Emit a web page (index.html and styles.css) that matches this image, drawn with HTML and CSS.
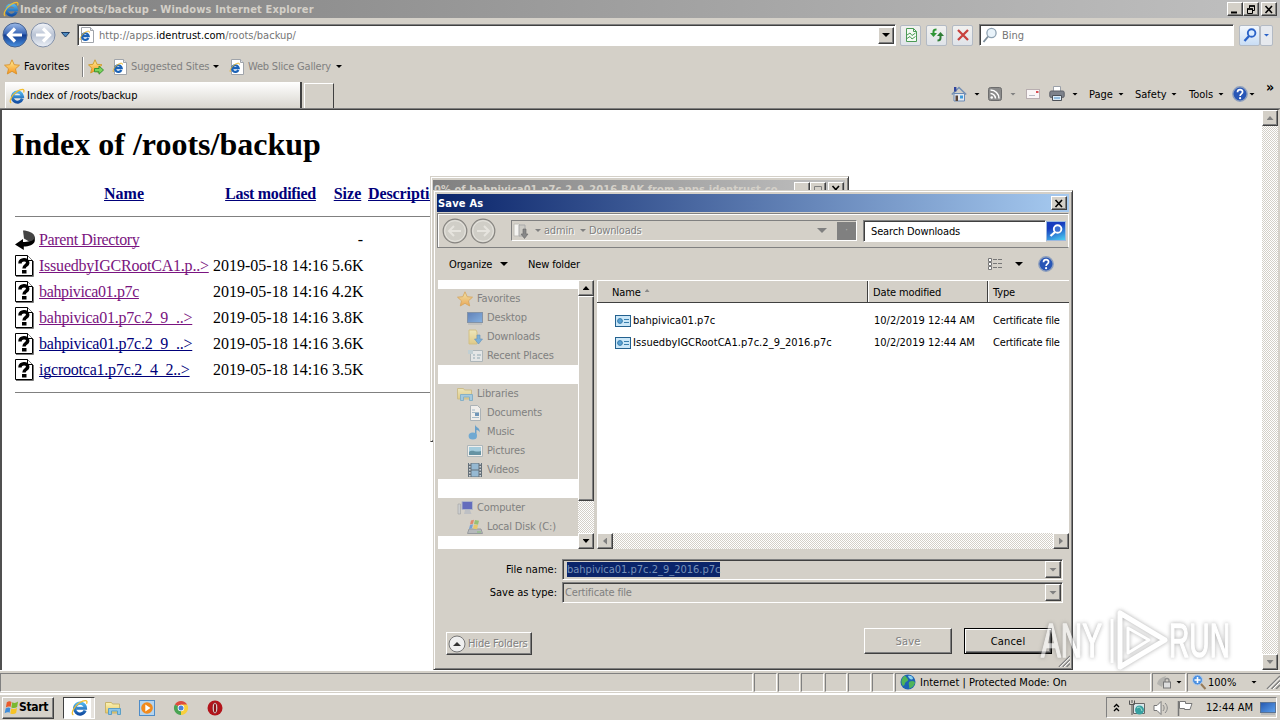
FILE: index.html
```html
<!DOCTYPE html>
<html lang="en">
<head>
    <meta charset="UTF-8">
    <title>Index of /roots/backup - Windows Internet Explorer</title>
    <link rel="stylesheet" href="styles.css">
</head>
<body>
    <!-- Icon sprite -->
    <svg class="sprite" width="0" height="0">
        <defs>
            <linearGradient id="gBlue" x1="0" y1="0" x2="0" y2="1"><stop offset="0" stop-color="#9dbbe8"/><stop offset=".45" stop-color="#3b68b8"/><stop offset=".5" stop-color="#123c91"/><stop offset="1" stop-color="#4a92e0"/></linearGradient>
            <linearGradient id="gPale" x1="0" y1="0" x2="0" y2="1"><stop offset="0" stop-color="#f4f6fa"/><stop offset=".5" stop-color="#b9c3d4"/><stop offset="1" stop-color="#edf1f7"/></linearGradient>
            <linearGradient id="gStar" x1="0" y1="0" x2="0" y2="1"><stop offset="0" stop-color="#fff09a"/><stop offset="1" stop-color="#f7941d"/></linearGradient>
            <linearGradient id="gFolder" x1="0" y1="0" x2="0" y2="1"><stop offset="0" stop-color="#fbf3b4"/><stop offset="1" stop-color="#e6c766"/></linearGradient>
            <linearGradient id="gScreen" x1="0" y1="0" x2="1" y2="1"><stop offset="0" stop-color="#2457ae"/><stop offset="1" stop-color="#5ea2ee"/></linearGradient>
            <linearGradient id="gIe" x1="0" y1="0" x2="0" y2="1"><stop offset="0" stop-color="#4fb4ee"/><stop offset="1" stop-color="#1450a4"/></linearGradient>
        </defs>
        <symbol id="ie" viewBox="0 0 16 16">
            <path d="M13.300 10.800A5.100 5.100 0 1 1 13.600 8.700H5" fill="none" stroke="url(#gIe)" stroke-width="3"/>
            <path d="M2.200 15C-.6 13.400 3.200 6.600 8 3.600 12 1 16.400 .2 14.600 4.400" fill="none" stroke="#f2bd2d" stroke-width="1.200"/>
        </symbol>
        <symbol id="iepage" viewBox="0 0 16 16">
            <path d="M2.500.5h9l3 3v12h-12z" fill="#fff" stroke="#a0a4aa"/>
            <path d="M11.500.5v3h3" fill="#e0e3e8" stroke="#a0a4aa"/>
            <path d="M9.400 11A3.300 3.300 0 1 1 9.700 9.200H4" fill="none" stroke="#1c63b7" stroke-width="2.200"/>
            <path d="M1.600 13C0 11.600 3 7.400 6 5.400 9 3.600 11 4 10.400 5.600" fill="none" stroke="#e9b62c"/>
        </symbol>
        <symbol id="back" viewBox="0 0 26 26">
            <circle cx="13" cy="13" r="12" fill="url(#gBlue)" stroke="#46618f"/>
            <path d="M13 6.500 6.500 13l6.500 6.500M7 13h13" fill="none" stroke="#fff" stroke-width="3.200"/>
        </symbol>
        <symbol id="forward" viewBox="0 0 26 26">
            <circle cx="13" cy="13" r="12" fill="url(#gPale)" stroke="#8290a8"/>
            <path d="M13 6.500 19.500 13 13 19.500M19 13H6" fill="none" stroke="#fff" stroke-width="3.200"/>
        </symbol>
        <symbol id="navoff" viewBox="0 0 26 26">
            <circle cx="13" cy="13" r="11.800" fill="#d0cec7" stroke="#85837f" stroke-width="1.200"/>
            <circle cx="13" cy="13" r="10.300" fill="none" stroke="#e6e4de"/>
            <path d="M12 8l-5 5 5 5M8 13h11" fill="none" stroke="#e6e4de" stroke-width="2"/>
        </symbol>
        <symbol id="star" viewBox="0 0 16 16">
            <path d="M8 .8 10.200 5.700 15.500 6.200 11.500 9.800 12.700 15 8 12.300 3.300 15 4.500 9.800 .5 6.200 5.800 5.700z" fill="url(#gStar)" stroke="#d8912a" stroke-width=".9"/>
        </symbol>
        <symbol id="staradd" viewBox="0 0 16 16">
            <path d="M7 .8 9 5.300 14 5.800 10.300 9.200 11.300 14 7 11.600 2.700 14 3.800 9.200 .5 5.800 5 5.300z" fill="url(#gStar)" stroke="#c99a2a" stroke-width=".9"/>
            <path d="M6.500 9.500h4.500V7l4.500 4-4.500 4.200v-2.400H6.500z" fill="#7bd35c" stroke="#2f8f2b" stroke-width=".9"/>
        </symbol>
        <symbol id="compat" viewBox="0 0 16 16">
            <path d="M3.500 1.500h7l3 3v10h-10z" fill="#f4faf4" stroke="#4b9a55"/>
            <path d="M10.500 1.500v3h3M4 8l3-2 2 2.500L12.500 6M4 11.500l3-2 2 2.500 3.500-2.500" fill="none" stroke="#4b9a55"/>
        </symbol>
        <symbol id="refresh" viewBox="0 0 16 16">
            <path d="M1 6h7L4.500 10z" fill="#2f9636"/><path d="M4.500 7V4.500Q4.500 2.500 7.500 2.500" fill="none" stroke="#2f9636" stroke-width="2"/>
            <path d="M8 9h7l-3.500-4z" fill="#2f7d36"/><path d="M11.500 8v3q0 2.500-3 2.500" fill="none" stroke="#2f7d36" stroke-width="2"/>
        </symbol>
        <symbol id="stop" viewBox="0 0 16 16">
            <path d="M3 3l10 10M13 3 3 13" stroke="#c8413d" stroke-width="2.300"/>
        </symbol>
        <symbol id="mag" viewBox="0 0 16 16">
            <circle cx="9.500" cy="6" r="4.600" fill="#e9f3fa" stroke="#8fa3b3" stroke-width="1.300"/>
            <path d="M6 9.500 1.500 15" stroke="#7e8f9c" stroke-width="1.800"/>
        </symbol>
        <symbol id="magblue" viewBox="0 0 16 16">
            <circle cx="9.600" cy="6" r="3.800" fill="#d9ebff" stroke="#2a62c8" stroke-width="1.900"/>
            <path d="M7 9 2.500 14" stroke="#2a62c8" stroke-width="2.300"/>
        </symbol>
        <symbol id="magwhite" viewBox="0 0 16 16">
            <circle cx="9.600" cy="6" r="3.800" fill="#3b6fd0" stroke="#fff" stroke-width="1.900"/>
            <path d="M7 9 2.500 13" stroke="#fff" stroke-width="2.300"/>
        </symbol>
        <symbol id="home" viewBox="0 0 16 16">
            <path d="M3 7.500h10.500V15H3z" fill="#e4e9f0" stroke="#6c8bb5"/>
            <path d="M.8 8.500 8 1.500l7.200 7" fill="none" stroke="#7590b4" stroke-width="1.600"/>
            <path d="M3 1h2.400v4.500H3z" fill="#31449c"/>
            <path d="M4.500 9.500h2.500V15H4.500z" fill="#5b4538"/><path d="M9 9.500h3v3H9z" fill="#3d9bdc"/>
        </symbol>
        <symbol id="rss" viewBox="0 0 16 16">
            <rect x="1.500" y="1.500" width="13" height="13" rx="2" fill="#8b8b8b" stroke="#6d6d6d"/>
            <circle cx="4.700" cy="11.500" r="1.300" fill="#fff"/>
            <path d="M3.500 7.500a5 5 0 0 1 5 5M3.500 4a8.500 8.500 0 0 1 8.500 8.500" fill="none" stroke="#fff" stroke-width="1.500"/>
        </symbol>
        <symbol id="mail" viewBox="0 0 16 16">
            <rect x="1.500" y="3.500" width="13" height="9" fill="#faf6f6" stroke="#b8aeb0"/>
            <path d="M11 5h2.500v2H11z" fill="#d94f54"/><path d="M4 9.500h6" stroke="#b9bcc4"/>
        </symbol>
        <symbol id="printer" viewBox="0 0 16 16">
            <path d="M4.500.5h7v5h-7z" fill="#fff" stroke="#9ba0a8"/>
            <rect x=".8" y="5" width="14.400" height="6.500" rx="1.500" fill="#7d828b" stroke="#5d6068"/>
            <path d="M3.500 9.500h9v5h-9z" fill="#dcecf8" stroke="#4d5158"/><path d="M5 12h6" stroke="#4a8cc4"/>
        </symbol>
        <symbol id="help" viewBox="0 0 16 16">
            <circle cx="8" cy="8" r="7.200" fill="#2856b6" stroke="#8fa0bd" stroke-width="1.400"/>
            <path d="M5.500 6.200C5.500 2.700 10.700 2.900 10.600 6 10.500 7.800 8.200 8 8.100 10" fill="none" stroke="#fff" stroke-width="1.700"/>
            <circle cx="8.100" cy="12.200" r="1.100" fill="#fff"/>
        </symbol>
        <symbol id="qfile" viewBox="0 0 20 22">
            <path d="M.5.500h12l5 5v15H.5z" fill="#fff" stroke="#000"/><path d="M12.500.500v5h5" fill="#fff" stroke="#000"/><path d="M18.500 6v15.500H1" fill="none" stroke="#777"/>
            <path d="M5 8.500C4.800 3.500 13 3.500 12.700 8 12.400 10.600 9 10.200 9 13.500" fill="none" stroke="#000" stroke-width="3.500"/>
            <path d="M7 15h4.500v3.500H7z" fill="#000"/>
        </symbol>
        <symbol id="parent" viewBox="0 0 20 22">
            <path d="M19.800 8v4c-1 4-6 5.500-11 5.500V21L0 15.500 8 10v3c5 0 9-1 11.800-5z" fill="#000"/>
            <path d="M8 1.500c5 0 11 2 12 7-1 2.500-3 3.500-6 4l-5-3z" fill="#444"/>
        </symbol>
        <symbol id="folderdown" viewBox="0 0 16 16">
            <path d="M1 1h5l1 1v11H1z" fill="#f5f4f1" stroke="#c0beb8"/><path d="M6 2h6v11H6z" fill="#cdcbc5" stroke="#aaa"/>
            <path d="M10 6h3v5h2l-3.500 4.500L8 11h2z" fill="#888" stroke="#666" stroke-width=".6"/>
        </symbol>
        <symbol id="views" viewBox="0 0 16 16">
            <path d="M1.500 2.500h3v3h-3zM1.500 6.500h3v3h-3zM1.500 10.500h3v3h-3z" fill="#fff" stroke="#777"/>
            <path d="M6 3.500h4m1 0h4M6 7.500h4m1 0h4M6 11.500h4m1 0h4" stroke="#777"/>
        </symbol>
        <symbol id="cert" viewBox="0 0 16 12">
            <rect x=".5" y=".5" width="15" height="11" fill="#cbe7f8" stroke="#24618f"/>
            <circle cx="5" cy="6" r="2.400" fill="#5aa2d4" stroke="#387cab"/><path d="M9 4.500h5M9 7.500h5" stroke="#397fae"/>
        </symbol>
        <symbol id="monitor" viewBox="0 0 16 16">
            <rect x=".5" y="2.500" width="15" height="10" fill="url(#gScreen)" stroke="#5a7394"/><path d="M1 14h14" stroke="#9aa2ac"/>
        </symbol>
        <symbol id="dlfolder" viewBox="0 0 16 16">
            <path d="M2 1h7l1 2v12H2z" fill="url(#gFolder)" stroke="#d3b862"/>
            <path d="M10 6h3v4h2.500L11.500 15 7.500 10H10z" fill="#4f9fdf" stroke="#2c72b1" stroke-width=".6"/>
        </symbol>
        <symbol id="recent" viewBox="0 0 16 16">
            <path d="M3.500 2.500h12v11h-12z" fill="#eef3f6" stroke="#9aa9b2"/><path d="M1 2h5v4H1z" fill="#b8cfda"/>
            <path d="M6 7h2M10 7h4M6 10h2M10 10h3" stroke="#6d93a8"/>
        </symbol>
        <symbol id="libs" viewBox="0 0 16 16">
            <path d="M.5 2.500h6l1 1.500h7v9h-14z" fill="url(#gFolder)" stroke="#c8b36b"/>
            <path d="M3.500 8.500h12v6h-3V11h-6v3.500h-3z" fill="#8cc6ea" stroke="#5b9fc6"/>
        </symbol>
        <symbol id="doc" viewBox="0 0 16 16">
            <path d="M3.500.5h7l3 3v12h-10z" fill="#fff" stroke="#96a3ad"/><path d="M5 5h3M5 7.500h7M5 12.500h7" stroke="#8fb0c8"/><path d="M8 8h4v3H8z" fill="#3c78b0"/>
        </symbol>
        <symbol id="music" viewBox="0 0 16 16">
            <path d="M8 0c0 4 6 3 4.500 9C13 6.500 9.500 6 9.500 6v6H8z" fill="#3288cc"/><ellipse cx="5.800" cy="12" rx="4.200" ry="3.600" fill="#3c95d8"/>
        </symbol>
        <symbol id="pic" viewBox="0 0 16 16">
            <path d="M.5 2.500h15v11H.5z" fill="#fff" stroke="#9aaab4"/><path d="M2 4h12v8H2z" fill="#8dcbe8"/><path d="M2 9c4-3 6 1 12-1v4H2z" fill="#2c7390"/>
        </symbol>
        <symbol id="video" viewBox="0 0 16 16">
            <path d="M1 1h14v14H1z" fill="#2b3e50"/><path d="M4.500 1.500h7v6h-7zM4.500 8.500h7v6h-7z" fill="#76aed8"/><path d="M2.800 1v14M13.200 1v14" stroke="#dfe6ec" stroke-width="1.400" stroke-dasharray="1.500 1.500"/>
        </symbol>
        <symbol id="computer" viewBox="0 0 16 16">
            <path d="M5 1.500h10.500v8H5z" fill="#2939b8" stroke="#9ba8c8"/><path d="M8 10h5l1.500 4H7z" fill="#b3b8c2"/><path d="M1 4h2.500v10H1z" fill="#c9cdd4" stroke="#83898f" stroke-width=".6"/>
        </symbol>
        <symbol id="disk" viewBox="0 0 16 16">
            <path d="M2 10h12l1.500 4.500H.5z" fill="#a7adb5" stroke="#777e88"/>
            <path d="M4 1.500l3-.8-1 4-3 .8z" fill="#e5623c"/><path d="M8 1l4 .8-1 4L7 5z" fill="#79b84a"/><path d="M3 6l3-.8-1 4-3 .8z" fill="#4a88d6"/><path d="M7 5.500l4 .8-1 4-4-.8z" fill="#f2c53b"/><path d="M10 13h4" stroke="#57b946"/>
        </symbol>
        <symbol id="winlogo" viewBox="0 0 16 16">
            <path d="M3 2.500C5 1 6.500 1.300 8 2L7 7.500C5.300 6.700 4 6.800 2 8z" fill="#ea5b2c"/><path d="M8.800 2.500c2 .9 4 .8 6.200-.8L14 7.400c-2 1.300-4 1.400-6.200.5z" fill="#7ab82f"/>
            <path d="M1.800 9c2-1.400 3.500-1.200 5-.5L6 13.700c-1.800-.8-3.200-.7-5.300.5z" fill="#3f8ddb"/><path d="M7.700 9c2 .8 4 .8 6.200-.6l-1 5.500c-2 1.300-4 1.300-6.200.4z" fill="#f7c325"/>
        </symbol>
        <symbol id="wmp" viewBox="0 0 16 16">
            <rect x=".5" y=".5" width="15" height="15" fill="#b5d4ee" stroke="#4e8cc8"/><circle cx="8" cy="8" r="5.800" fill="#f28a1c"/><path d="M6.300 4.600 11.500 8l-5.200 3.400z" fill="#fff"/>
        </symbol>
        <symbol id="chrome" viewBox="0 0 16 16">
            <path d="M8 8 1.900 4.500A7 7 0 0 1 14.100 4.500z" fill="#dd4b3e"/><path d="M8 8V4.500h6.100A7 7 0 0 1 8 15z" fill="#f8cf3c"/><path d="M8 8v7A7 7 0 0 1 1.900 4.500z" fill="#4aa453"/>
            <circle cx="8" cy="8" r="3.300" fill="#fff"/><circle cx="8" cy="8" r="2.500" fill="#4a82d8"/>
        </symbol>
        <symbol id="opera" viewBox="0 0 16 16">
            <circle cx="8" cy="8" r="7.500" fill="#b3141b"/><ellipse cx="8" cy="8" rx="2.700" ry="5.500" fill="#e9e4e2" stroke="#7d0b10" stroke-width=".6"/><ellipse cx="8" cy="8" rx="1.200" ry="4.500" fill="#8c0e13"/>
        </symbol>
        <symbol id="globe" viewBox="0 0 16 16">
            <circle cx="8" cy="8" r="7.500" fill="#1d63b4"/><path d="M5 1.500C1 4 .5 9 3 12c3-1 1-3 3-4s3-2 1-4zM9 8c3-2 6-1 6 1-1 3-3 5-6 5.500 1-2-1-4 0-6.500z" fill="#4fb45a"/><path d="M8 2c3-1 5 1 5 3-2 1-4 0-5-3z" fill="#8ad3f0"/>
        </symbol>
        <symbol id="protect" viewBox="0 0 16 16">
            <path d="M1 10c1-5 5-7 9-8l-4 11z" fill="#b4b3af"/><path d="M9 8V6.500a2 2 0 0 1 4 0V8" fill="none" stroke="#8b8b8b" stroke-width="1.400"/><rect x="7.500" y="8" width="7" height="6" fill="#ddd" stroke="#777"/>
        </symbol>
        <symbol id="zoomin" viewBox="0 0 16 16">
            <circle cx="6.500" cy="6" r="5" fill="#4c90e0" stroke="#b5cdea"/><path d="M6.500 3v6M3.500 6h6" stroke="#fff" stroke-width="1.600"/><path d="M10 10l4.500 5" stroke="#967b5a" stroke-width="2"/>
        </symbol>
        <symbol id="net" viewBox="0 0 16 16">
            <path d="M4.500 3.500h11v10h-11z" fill="#d9e7ea" stroke="#666"/><circle cx="10.500" cy="10" r="4.500" fill="#37a0a0"/><path d="M8 8c3-2 4 0 5 3" stroke="#a5dfd0" fill="none"/>
            <path d="M.5.500v4h5v-4M3 0v3M3 5v10" fill="none" stroke="#555"/>
        </symbol>
        <symbol id="sound" viewBox="0 0 16 16">
            <path d="M1 5.500h3l4-4v13l-4-4H1z" fill="#fff" stroke="#777"/><path d="M10 5c1.500 2 1.500 4 0 6M12 3c3 3 3 7 0 10" fill="none" stroke="#888"/>
        </symbol>
        <symbol id="flag" viewBox="0 0 16 16">
            <path d="M1.500 1v15" stroke="#777" stroke-width="1.500"/><path d="M2.500 1.500h6v2h6.500l-2 6H7.500v-1h-5z" fill="#fff" stroke="#777"/>
        </symbol>
        <symbol id="grip" viewBox="0 0 14 14">
            <path d="M14 1 1 14M14 5.500 5.500 14M14 10l-4 4" stroke="#808080" stroke-width="1.500"/><path d="M14 2.500 2.500 14M14 7 7 14" stroke="#fff"/>
        </symbol>
    </svg>

    <div class="browser">
        <div class="titlebar">
            <svg class="icon"><use href="#ie"/></svg>
            <span class="title-text">Index of /roots/backup - Windows Internet Explorer</span>
            <div class="window-buttons">
                <span class="win-btn"><svg width="10" height="9"><path d="M1 7.500h6" stroke="#000" stroke-width="2"/></svg></span>
                <span class="win-btn"><svg width="10" height="9"><path d="M3.500 3V1h5v4.500H7M1.500 4h5v4.500h-5z" fill="none" stroke="#000"/><path d="M3 1h6M1 4h6" stroke="#000" stroke-width="1.500"/></svg></span>
                <span class="win-btn close"><svg width="10" height="9"><path d="M1.500 1 8 8M8 1 1.500 8" stroke="#000" stroke-width="1.600"/></svg></span>
            </div>
        </div>

        <div class="navbar">
            <svg class="nav-round"><use href="#back"/></svg>
            <svg class="nav-round"><use href="#forward"/></svg>
            <svg class="recent-caret" width="10" height="6"><path d="M.5.500h8L4.500 5z" fill="#4e8ac0" stroke="#1c3d66"/></svg>
            <div class="field address">
                <svg class="icon"><use href="#iepage"/></svg>
                <span class="url">http://apps.<b>identrust.com</b>/roots/backup/</span>
                <span class="drop"><i class="caret wide"></i></span>
            </div>
            <span class="tool-btn"><svg class="icon"><use href="#compat"/></svg></span>
            <span class="tool-btn"><svg class="icon"><use href="#refresh"/></svg></span>
            <span class="tool-btn"><svg class="icon"><use href="#stop"/></svg></span>
            <div class="field search">
                <svg class="icon"><use href="#mag"/></svg>
                <span>Bing</span>
            </div>
            <span class="tool-btn go"><svg class="icon"><use href="#magblue"/></svg></span>
            <span class="tool-btn go-drop"><i class="caret blue"></i></span>
        </div>

        <div class="favbar">
            <svg class="icon"><use href="#star"/></svg>
            <span class="fav-label">Favorites</span>
            <svg class="icon add"><use href="#staradd"/></svg>
            <svg class="icon page1"><use href="#iepage"/></svg>
            <span class="fav-link suggested">Suggested Sites</span><i class="caret"></i>
            <svg class="icon page2"><use href="#iepage"/></svg>
            <span class="fav-link slice">Web Slice Gallery</span><i class="caret"></i>
        </div>

        <div class="tabbar">
            <div class="tab"><svg class="icon"><use href="#ie"/></svg><span>Index of /roots/backup</span></div>
            <div class="new-tab"></div>
            <div class="commands">
                <svg class="icon"><use href="#home"/></svg><i class="caret"></i>
                <svg class="icon rss"><use href="#rss"/></svg><i class="caret off"></i>
                <svg class="icon mail"><use href="#mail"/></svg>
                <svg class="icon print"><use href="#printer"/></svg><i class="caret"></i>
                <span class="cmd page">Page</span><i class="caret"></i>
                <span class="cmd safety">Safety</span><i class="caret"></i>
                <span class="cmd tools">Tools</span><i class="caret"></i>
                <svg class="icon helpicon"><use href="#help"/></svg><i class="caret near"></i>
                <span class="more">»</span>
            </div>
        </div>

        <div class="viewport">
            <div class="document">
                <h1>Index of /roots/backup</h1>
                <div class="listing head">
                    <span></span><a>Name</a><a class="modified">Last modified</a><a>Size</a><a class="desc">Description</a>
                </div>
                <hr>
                <div class="listing">
                    <svg><use href="#parent"/></svg><a class="visited tight">Parent Directory</a><span></span><span class="size">-</span>
                </div>
                <div class="listing">
                    <svg><use href="#qfile"/></svg><a class="visited">IssuedbyIGCRootCA1.p..&gt;</a><span>2019-05-18 14:16</span><span class="size">5.6K</span>
                </div>
                <div class="listing">
                    <svg><use href="#qfile"/></svg><a class="visited tight">bahpivica01.p7c</a><span>2019-05-18 14:16</span><span class="size">4.2K</span>
                </div>
                <div class="listing">
                    <svg><use href="#qfile"/></svg><a class="visited">bahpivica01.p7c.2_9_..&gt;</a><span>2019-05-18 14:16</span><span class="size">3.8K</span>
                </div>
                <div class="listing">
                    <svg><use href="#qfile"/></svg><a>bahpivica01.p7c.2_9_..&gt;</a><span>2019-05-18 14:16</span><span class="size">3.6K</span>
                </div>
                <div class="listing">
                    <svg><use href="#qfile"/></svg><a>igcrootca1.p7c.2_4_2..&gt;</a><span>2019-05-18 14:16</span><span class="size">3.5K</span>
                </div>
                <hr>
            </div>
            <div class="scrollbar page-scroll">
                <span class="scroll-btn"><i class="arrow up off"></i></span>
                <span class="scroll-btn"><i class="arrow down off"></i></span>
            </div>
        </div>

        <div class="statusbar">
            <div class="cell main"></div>
            <div class="cell"></div><div class="cell"></div><div class="cell"></div><div class="cell"></div><div class="cell"></div><div class="cell"></div>
            <div class="cell zone"><svg class="icon"><use href="#globe"/></svg><span>Internet | Protected Mode: On</span></div>
            <div class="cell lock"><svg class="icon"><use href="#protect"/></svg><i class="caret"></i></div>
            <div class="cell zoom"><svg class="icon"><use href="#zoomin"/></svg><span>100%</span><i class="caret"></i><svg class="grip"><use href="#grip"/></svg></div>
        </div>
    </div>

    <div class="taskbar">
        <div class="start"><svg><use href="#winlogo"/></svg><span>Start</span></div>
        <div class="task-active"><svg><use href="#ie"/></svg></div>
        <svg class="pin"><use href="#libs"/></svg>
        <svg class="pin"><use href="#wmp"/></svg>
        <svg class="pin"><use href="#chrome"/></svg>
        <svg class="pin"><use href="#opera"/></svg>
        <div class="tray">
            <svg class="chev" width="7" height="9"><path d="M1 4l2.500-2.500L6 4M1 8l2.500-2.500L6 8" fill="none" stroke="#000" stroke-width="1.300"/></svg>
            <svg class="icon"><use href="#net"/></svg>
            <svg class="icon"><use href="#sound"/></svg>
            <svg class="icon"><use href="#flag"/></svg>
            <span class="clock">12:44 AM</span>
            <svg class="icon"><use href="#monitor"/></svg>
        </div>
    </div>

    <!-- Download progress window, mostly behind the dialog -->
    <div class="window progress">
        <div class="progress-title">
            <span>0% of bahpivica01.p7c.2_9_2016.BAK from apps.identrust.co...</span>
            <b class="win-btn"></b>
            <b class="win-btn"><svg width="10" height="9"><path d="M1.500 1.500h7v7h-7z" fill="none" stroke="#808080"/></svg></b>
            <b class="win-btn"><svg width="10" height="9"><path d="M1.500 1 8 8M8 1 1.500 8" stroke="#000" stroke-width="1.600"/></svg></b>
        </div>
    </div>

    <!-- Save As dialog -->
    <div class="window dialog">
        <div class="dialog-title">
            <span>Save As</span>
            <b class="win-btn"><svg width="10" height="9"><path d="M1.500 1 8 8M8 1 1.500 8" stroke="#000" stroke-width="1.600"/></svg></b>
        </div>
        <div class="dialog-nav">
            <svg class="round"><use href="#navoff"/></svg>
            <svg class="round flip"><use href="#navoff"/></svg>
            <div class="path">
                <svg class="icon"><use href="#folderdown"/></svg>
                <i class="caret off"></i><span class="crumb admin">admin</span>
                <i class="caret off"></i><span class="crumb">Downloads</span>
                <i class="caret big off"></i><span class="go-off">·</span>
            </div>
            <div class="field dialog-search">Search Downloads</div>
            <div class="search-btn"><svg class="icon"><use href="#magwhite"/></svg></div>
        </div>
        <div class="dialog-tools">
            <span class="organize">Organize</span><i class="caret big"></i>
            <span class="newfolder">New folder</span>
            <svg class="icon views"><use href="#views"/></svg><i class="caret big"></i>
            <svg class="icon help"><use href="#help"/></svg>
        </div>
        <div class="dialog-body">
            <div class="tree">
                <div class="group">
                    <div class="node root"><svg class="icon"><use href="#star"/></svg>Favorites</div>
                    <div class="node"><svg class="icon"><use href="#monitor"/></svg>Desktop</div>
                    <div class="node"><svg class="icon"><use href="#dlfolder"/></svg>Downloads</div>
                    <div class="node"><svg class="icon"><use href="#recent"/></svg>Recent Places</div>
                </div>
                <div class="group">
                    <div class="node root"><svg class="icon"><use href="#libs"/></svg>Libraries</div>
                    <div class="node"><svg class="icon"><use href="#doc"/></svg>Documents</div>
                    <div class="node"><svg class="icon"><use href="#music"/></svg>Music</div>
                    <div class="node"><svg class="icon"><use href="#pic"/></svg>Pictures</div>
                    <div class="node"><svg class="icon"><use href="#video"/></svg>Videos</div>
                </div>
                <div class="group">
                    <div class="node root"><svg class="icon"><use href="#computer"/></svg>Computer</div>
                    <div class="node"><svg class="icon"><use href="#disk"/></svg>Local Disk (C:)</div>
                </div>
            </div>
            <div class="scrollbar tree-scroll">
                <span class="scroll-btn"><i class="arrow up"></i></span>
                <span class="thumb"></span>
                <span class="scroll-btn end"><i class="arrow down"></i></span>
            </div>
            <div class="files">
                <div class="row columns"><span class="colname">Name <i class="arrow up tiny"></i></span><span>Date modified</span><span>Type</span></div>
                <div class="row file"><span class="name"><svg class="cert"><use href="#cert"/></svg>bahpivica01.p7c</span><span>10/2/2019 12:44 AM</span><span class="type">Certificate file</span></div>
                <div class="row file"><span class="name"><svg class="cert"><use href="#cert"/></svg>IssuedbyIGCRootCA1.p7c.2_9_2016.p7c</span><span>10/2/2019 12:44 AM</span><span class="type">Certificate file</span></div>
                <div class="scrollbar files-scroll">
                    <span class="scroll-btn"><i class="arrow left off"></i></span>
                    <span class="scroll-btn"><i class="arrow right off"></i></span>
                </div>
            </div>
        </div>
        <div class="form">
            <label>File name:</label>
            <div class="field combo"><span class="selected">bahpivica01.p7c.2_9_2016.p7c</span><span class="drop"><i class="caret wide off"></i></span></div>
            <label>Save as type:</label>
            <div class="field combo"><span class="type">Certificate file</span><span class="drop"><i class="caret wide off"></i></span></div>
        </div>
        <div class="actions">
            <div class="hide-folders">
                <svg width="18" height="18"><circle cx="9" cy="9" r="8" fill="#efefef" stroke="#777"/><path d="M5 11l4-4 4 4z" fill="#333"/></svg>
                <span>Hide Folders</span>
            </div>
            <div class="btn off">Save</div>
            <div class="btn default"><span>Cancel</span></div>
        </div>
        <svg class="grip corner"><use href="#grip"/></svg>
    </div>

    <svg class="watermark" width="244" height="72" viewBox="0 0 244 72">
        <text x="5" y="52" textLength="61" lengthAdjust="spacingAndGlyphs">ANY</text>
        <path d="M84 8v54l45-27z" fill="none" stroke-width="5"/>
        <path d="M76 14v44M92 23v25l21-13z" fill="none" stroke-width="3"/>
        <text x="133" y="52" textLength="61" lengthAdjust="spacingAndGlyphs">RUN</text>
    </svg>
</body>
</html>
```
FILE: styles.css
```css
* {
    box-sizing: border-box;
}
body {
    margin: 0;
    width: 1280px;
    height: 720px;
    overflow: hidden;
    position: relative;
    display: flex;
    flex-direction: column;
    background: #d4d0c8;
    color: #000;
    font-family: "DejaVu Sans Condensed", "DejaVu Sans", sans-serif;
    font-size: 11px;
    letter-spacing: 0;
    line-height: 15px;
    white-space: nowrap;
}
.sprite {
    position: absolute;
}
svg {
    display: block;
    flex: none;
}
.icon {
    width: 16px;
    height: 16px;
}

/* Arrows */
.caret {
    flex: none;
    width: 6px;
    height: 3px;
    background: #000;
    clip-path: polygon(0 0, 100% 0, 50% 100%);
}
.caret.wide {
    width: 8px;
    height: 4px;
}
.caret.big {
    width: 8px;
    height: 4px;
}
.caret.off {
    background: #808080;
}
.caret.blue {
    background: #2a62c8;
}
.arrow {
    width: 7px;
    height: 4px;
    background: #000;
}
.arrow.up { clip-path: polygon(50% 0, 100% 100%, 0 100%); }
.arrow.down { clip-path: polygon(0 0, 100% 0, 50% 100%); }
.arrow.left { width: 4px; height: 7px; clip-path: polygon(100% 0, 100% 100%, 0 50%); }
.arrow.right { width: 4px; height: 7px; clip-path: polygon(0 0, 100% 50%, 0 100%); }
.arrow.off { background: #808080; }
.arrow.tiny {
    display: inline-block;
    width: 5px;
    height: 3px;
    margin: 0 0 4px 1px;
    background: #888;
}

/* Bevels */
.win-btn, .drop, .scroll-btn, .thumb {
    display: flex;
    align-items: center;
    justify-content: center;
    flex: none;
    background: #d4d0c8;
    border: 1px solid;
    border-color: #fff #404040 #404040 #fff;
    box-shadow: inset -1px -1px #808080;
}
.win-btn {
    width: 16px;
    height: 14px;
}
.drop {
    width: 16px;
    height: 17px;
    margin-left: auto;
}
.scroll-btn {
    width: 16px;
    height: 16px;
}
.field {
    display: flex;
    align-items: center;
    background: #fff;
    border: 1px solid;
    border-color: #808080 #fff #fff #808080;
    box-shadow: inset 1px 1px #404040;
}
.scrollbar {
    display: flex;
    background: repeating-conic-gradient(#fff 0 25%, #d4d0c8 0 50%) 0 0 / 2px 2px;
}

/* Browser */
.browser {
    height: 694px;
    display: flex;
    flex-direction: column;
}
.titlebar {
    height: 18px;
    display: flex;
    align-items: center;
    padding: 0 3px 0 3px;
    background: linear-gradient(90deg, #808080, #c0c0c0);
    color: #d4d0c8;
    font-weight: bold;
}
.title-text {
    margin-left: 1px;
    padding-top: 1px;
    letter-spacing: 0.15px;
}
.window-buttons {
    display: flex;
    margin-left: auto;
}
.win-btn.close {
    margin-left: 2px;
}
.navbar {
    height: 35px;
    display: flex;
    align-items: center;
    padding: 0 0 1px 2px;
}
.nav-round {
    width: 26px;
    height: 26px;
    margin-right: 2px;
}
.recent-caret {
    margin: 0 6px 0 3px;
}
.address {
    width: 819px;
    height: 22px;
    padding: 0 1px;
    margin-right: 4px;
}
.url {
    margin-left: 4px;
    padding-top: 1px;
    color: #757575;
}
.url b {
    font-weight: normal;
    color: #000;
}
.tool-btn {
    display: flex;
    align-items: center;
    justify-content: center;
    width: 21px;
    height: 21px;
    margin-right: 5px;
    border: 1px solid #b3bac4;
    border-radius: 2px;
    background: linear-gradient(#f1f1ef, #dfe3e9);
}
.search {
    width: 255px;
    height: 22px;
    padding-left: 2px;
    margin: 0 5px 0 1px;
    color: #757575;
}
.search span {
    margin-left: 4px;
    padding-top: 1px;
}
.tool-btn.go {
    margin-right: 0;
    background: linear-gradient(#f3f7fc, #c9ddf4);
}
.tool-btn.go-drop {
    width: 13px;
    margin-right: 0;
    background: #e6e9ee;
}
.favbar {
    height: 27px;
    display: flex;
    align-items: center;
    padding-left: 4px;
}
.fav-label {
    width: 59px;
    height: 20px;
    line-height: 19px;
    margin-left: 4px;
    letter-spacing: 0.1px;
    border-right: 1px solid #808080;
    box-shadow: 1px 0 #fff;
}
.icon.add {
    margin-left: 5px;
}
.icon.page1 {
    margin-left: 8px;
}
.fav-link {
    color: #808080;
    margin-left: 3px;
    letter-spacing: -0.1px;
}
.suggested {
    width: 82px;
}
.slice {
    width: 88px;
    letter-spacing: -0.2px;
}
.icon.page2 {
    margin-left: 10px;
}
.tabbar {
    height: 29px;
    display: flex;
    align-items: flex-end;
    padding-left: 5px;
    border-bottom: 1px solid #808080;
}
.tab {
    width: 297px;
    height: 26px;
    display: flex;
    align-items: center;
    padding: 1px 0 0 3px;
    background: linear-gradient(#fff, #d9d6cf);
    border-right: 2px solid #404040;
    border-left: 1px solid #fff;
}
.tab span {
    margin-left: 2px;
}
.new-tab {
    width: 30px;
    height: 25px;
    margin-left: 2px;
    border: 1px solid #fff;
    border-right: 1px solid #404040;
    border-bottom: 0;
}
.commands {
    display: flex;
    align-items: center;
    height: 28px;
    margin-left: 617px;
}
.commands .caret {
    margin-left: 7px;
}
.commands .rss {
    margin-left: 7px;
}
.commands .mail {
    margin-left: 9px;
}
.commands .print {
    margin-left: 8px;
}
.commands .cmd {
    padding-top: 1px;
}
.commands .page {
    width: 25px;
    margin-left: 11px;
}
.commands .safety {
    width: 32px;
    margin-left: 11px;
}
.commands .tools {
    width: 25px;
    margin-left: 12px;
}
.commands .cmd + .caret {
    margin-left: 4px;
}
.commands .helpicon {
    margin-left: 8px;
}
.commands .caret.near {
    margin-left: 1px;
}
.more {
    align-self: flex-start;
    margin-left: 11px;
    font-size: 14px;
    font-weight: bold;
    line-height: 14px;
}

/* Page */
.viewport {
    height: 561px;
    display: flex;
    background: #fff;
    border-top: 1px solid #404040;
    border-left: 2px solid #505050;
    border-right: 2px solid #d4d0c8;
}
.document {
    flex: 1;
    font-family: "Liberation Serif", serif;
    font-size: 16px;
    line-height: 18px;
}
h1 {
    margin: 0;
    padding: 16px 0 0 10px;
    font-size: 32px;
    line-height: 37px;
    height: 71px;
}
.listing {
    display: grid;
    grid-template-columns: 20px 170px 115px 31px 90px;
    column-gap: 4px;
    align-items: center;
    height: 26px;
    padding-left: 13px;
}
.listing.head {
    font-weight: bold;
}
.listing svg {
    width: 20px;
    height: 22px;
}
.listing a {
    color: #00007a;
    text-decoration: underline;
    text-decoration-skip-ink: none;
    justify-self: start;
    letter-spacing: -0.22px;
}
.listing a.tight {
    letter-spacing: -0.36px;
}
.listing.head a {
    justify-self: center;
    letter-spacing: 0;
}
.listing.head .modified {
    letter-spacing: -0.3px;
}
.listing.head .desc {
    justify-self: start;
    letter-spacing: -0.1px;
    margin-left: 1px;
}
.listing .visited {
    color: #7a1480;
}
.listing .size {
    text-align: right;
}
hr {
    width: 450px;
    height: 1px;
    margin: 9px 0 10px 13px;
    border: 0;
    background: #808080;
}
.page-scroll {
    width: 16px;
    flex-direction: column;
    justify-content: space-between;
}

/* Status bar */
.statusbar {
    height: 24px;
    display: flex;
    align-items: center;
    gap: 1px;
    border-top: 1px solid #fff;
    border-bottom: 1px solid #fff;
}
.cell {
    width: 22.5px;
    height: 19px;
    display: flex;
    align-items: center;
    border: 1px solid;
    border-color: #808080 #fff #fff #808080;
}
.cell.main {
    width: 753px;
}
.cell.zone {
    width: 256px;
    padding-left: 4px;
    gap: 4px;
}
.cell.lock {
    width: 34px;
    padding-left: 3px;
    gap: 4px;
}
.cell.zoom {
    flex: 1;
    border-right: 0;
    padding-left: 3px;
}
.zoom span {
    width: 42px;
    margin-left: 1px;
}
.grip {
    width: 14px;
    height: 14px;
    margin-left: auto;
}
.zoom .caret {
    margin-left: 1px;
}

/* Taskbar */
.taskbar {
    height: 26px;
    display: flex;
    align-items: center;
    padding: 0 3px 0 2px;
    border-top: 1px solid #fff;
}
.start {
    width: 52px;
    height: 22px;
    display: flex;
    align-items: center;
    padding-left: 1px;
    font-weight: bold;
    font-size: 12px;
    letter-spacing: -0.3px;
    border: 1px solid;
    border-color: #fff #404040 #404040 #fff;
    box-shadow: inset -1px -1px #808080;
}
.start svg {
    width: 15px;
    height: 15px;
}
.task-active {
    width: 32px;
    height: 22px;
    margin: 0 10px 0 9px;
    display: flex;
    align-items: center;
    justify-content: center;
    background: #fff;
    border: 1px solid;
    border-color: #404040 #fff #fff #404040;
    box-shadow: inset -3px 0 #e6e3de;
}
.task-active svg {
    width: 17px;
    height: 17px;
}
.pin {
    width: 16px;
    height: 16px;
    margin-right: 18px;
}
.tray {
    width: 171px;
    height: 21px;
    margin-left: auto;
    display: flex;
    align-items: center;
    padding: 0 1px 0 6px;
    border: 1px solid;
    border-color: #808080 #fff #fff #808080;
}
.tray .icon {
    margin-left: 8px;
}
.tray .chev + .icon {
    margin-left: 9px;
}
.clock {
    width: 47px;
    margin-left: 13px;
}
.tray .clock + .icon {
    margin-left: 7px;
}

/* Floating windows */
.window {
    position: absolute;
    background: #d4d0c8;
    border: 1px solid;
    border-color: #d4d0c8 #404040 #404040 #d4d0c8;
    box-shadow: inset 1px 1px #fff, inset -1px -1px #808080;
}
.progress {
    left: 430px;
    top: 176px;
    width: 419px;
    height: 266px;
    padding: 3px 3px 3px 2px;
}
.progress-title {
    display: flex;
    align-items: center;
    height: 18px;
    padding-right: 1px;
    color: #d4d0c8;
    background: linear-gradient(90deg, #808080, #c0c0c0);
    font-weight: bold;
    letter-spacing: 0.08px;
}
.progress-title span {
    flex: 1;
    padding-left: 1px;
}
.progress-title .win-btn:last-child {
    margin-left: 2px;
}
.dialog {
    left: 433px;
    top: 190px;
    width: 640px;
    height: 480px;
    padding: 3px 3px 0;
}
.dialog-title {
    height: 18px;
    display: flex;
    align-items: center;
    justify-content: space-between;
    padding: 0 2px 0 1px;
    color: #fff;
    font-weight: bold;
    letter-spacing: 0.2px;
    background: linear-gradient(90deg, #0a246a, #a6caf0);
}
.dialog-title span {
    padding-top: 1px;
}
.dialog-nav {
    height: 35px;
    margin-top: 1px;
    display: flex;
    align-items: center;
    padding-left: 4px;
    border: 1px solid;
    border-color: #808080 #fff #808080 #808080;
    box-shadow: inset 1px 1px #fff;
}
.round {
    width: 26px;
    height: 26px;
    margin-right: 2px;
}
.round.flip {
    transform: scaleX(-1);
}
.path {
    width: 346px;
    height: 21px;
    margin-left: 13px;
    display: flex;
    align-items: center;
    padding-left: 1px;
    color: #808080;
    border: 1px solid;
    border-color: #808080 #fff #fff #808080;
    letter-spacing: -0.2px;
}
.path .caret {
    margin-left: 6px;
}
.crumb {
    margin-left: 3px;
    width: 55px;
    margin-top: -1px;
    text-shadow: 1px 1px #fff;
}
.crumb.admin {
    width: 30px;
}
.path .caret.big {
    width: 10px;
    height: 5px;
    margin: 0 0 0 173px;
}
.go-off {
    width: 19px;
    height: 18px;
    margin-left: auto;
    text-align: center;
    background: #808080;
    color: #aaa;
}
.dialog-search {
    width: 183px;
    height: 22px;
    margin-left: 6px;
    padding: 1px 0 0 7px;
    letter-spacing: -0.15px;
}
.search-btn {
    width: 20px;
    height: 20px;
    display: flex;
    align-items: center;
    justify-content: center;
    background: linear-gradient(160deg, #173cbf 30%, #4bd0f2);
    border: 1px solid #9cb8de;
}
.dialog-tools {
    height: 32px;
    display: flex;
    align-items: center;
    padding-left: 12px;
    letter-spacing: -0.15px;
}
.dialog-tools span {
    padding-top: 1px;
}
.organize {
    width: 51px;
}
.newfolder {
    width: 66px;
    margin-left: 20px;
}
.views {
    margin: 0 12px 0 393px;
}
.icon.help {
    margin-left: 15px;
}
.dialog-body {
    display: flex;
    height: 269px;
}
.tree {
    width: 141px;
    padding-top: 9px;
    background: #fff;
    border-left: 1px solid #d4d0c8;
    display: flex;
    flex-direction: column;
    gap: 19px;
}
.group {
    background: #d4d0c8;
}
.node {
    display: flex;
    align-items: center;
    height: 19px;
    padding-left: 29px;
    gap: 4px;
    color: #808080;
    letter-spacing: -0.15px;
}
.node.root {
    padding-left: 19px;
}
.node .icon {
    opacity: 0.65;
}
.tree-scroll {
    width: 16px;
    flex-direction: column;
}
.thumb {
    height: 205px;
}
.end {
    margin-top: auto;
}
.files {
    flex: 1;
    margin-left: 3px;
    background: #fff;
    display: flex;
    flex-direction: column;
}
.row {
    display: grid;
    grid-template-columns: 271px 120px 81px;
    height: 22px;
    align-items: center;
}
.row.columns {
    height: 23px;
    margin-bottom: 6px;
    background: #d4d0c8;
    border-top: 1px solid #fff;
    border-bottom: 1px solid #404040;
    align-items: stretch;
    line-height: 23px;
    letter-spacing: -0.15px;
}
.columns span {
    height: 21px;
    padding-left: 4px;
    border-right: 1px solid #404040;
    border-left: 1px solid #fff;
}
.columns span:last-child {
    border-right: 0;
}
.columns .colname {
    padding-left: 14px;
}
.file span {
    padding: 1px 0 0 6px;
}
.file span.type {
    padding-left: 5px;
}
.type {
    letter-spacing: -0.18px;
}
.file .name {
    display: flex;
    align-items: center;
    gap: 2px;
    padding-left: 18px;
    letter-spacing: 0.05px;
}
.cert {
    width: 16px;
    height: 12px;
}
.files-scroll {
    height: 16px;
    margin-top: auto;
    justify-content: space-between;
}
.form {
    display: grid;
    grid-template-columns: 120px 501px;
    column-gap: 5px;
    row-gap: 2px;
    align-items: center;
    padding-top: 10px;
}
.form label {
    text-align: right;
}
.combo {
    height: 21px;
    padding: 0 1px 0 2px;
    background: #d4d0c8;
    color: #808080;
}
.selected {
    margin-left: 2px;
    color: #7690b8;
    background: #0a246a;
}
.actions {
    display: flex;
    align-items: center;
    margin-top: 25px;
    padding-left: 9px;
}
.hide-folders {
    width: 86px;
    height: 23px;
    margin-top: 4px;
    display: flex;
    align-items: center;
    gap: 2px;
    padding-left: 1px;
    color: #808080;
    letter-spacing: -0.15px;
    text-shadow: 1px 1px #fff;
    border: 1px solid;
    border-color: #fff #404040 #404040 #fff;
    box-shadow: inset -1px -1px #808080;
}
.btn {
    width: 88px;
    height: 26px;
    margin: -1px 0 0 332px;
    padding-top: 1px;
    display: flex;
    align-items: center;
    justify-content: center;
    letter-spacing: 0.2px;
    border: 1px solid;
    border-color: #fff #404040 #404040 #fff;
    box-shadow: inset -1px -1px #808080;
}
.btn.off {
    color: #808080;
    text-shadow: 1px 1px #fff;
}
.btn.default {
    margin-left: 12px;
    border-color: #000;
    box-shadow: inset 1px 1px #fff, inset -1px -1px #404040, inset -2px -2px #808080;
}
.corner {
    position: absolute;
    right: 2px;
    bottom: 2px;
    width: 12px;
    height: 12px;
}
.watermark {
    position: absolute;
    left: 1036px;
    top: 605px;
    opacity: 0.62;
    filter: drop-shadow(0 0 2px #777);
    fill: #fff;
    stroke: #fff;
    stroke-linejoin: round;
}
.watermark text {
    font-family: "Liberation Sans", sans-serif;
    font-size: 49px;
    stroke-width: 1.5px;
}
```
